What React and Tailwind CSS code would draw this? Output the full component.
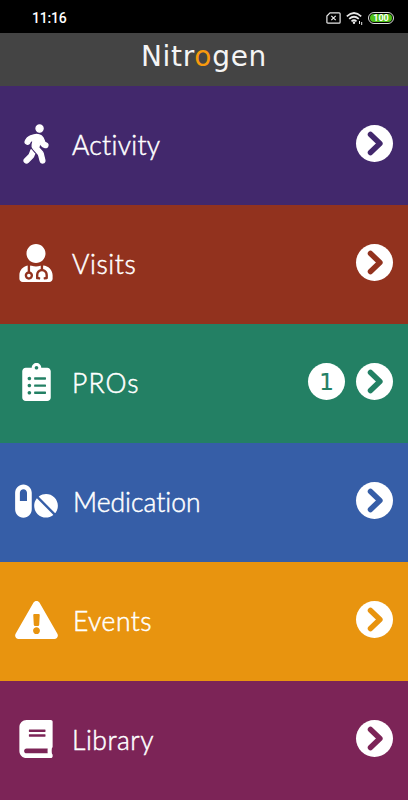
import React from "react";
import { FaWalking, FaUserMd, FaClipboardList, FaPills, FaExclamationTriangle, FaBook } from "react-icons/fa";

const rows = [
  { label: "Activity", Icon: FaWalking, icon: "w-[24px] mr-px overflow-visible [stroke-width:18] [stroke-linejoin:round]", row: "bg-[#42286c]", ink: "text-[#42286c]", text: "pl-[14px] tracking-[0.3px]" },
  { label: "Visits", Icon: FaUserMd, icon: "w-[34px] mr-[2px]", row: "bg-[#92321e]", ink: "text-[#92321e]", text: "pl-[14px] tracking-[0.6px]" },
  { label: "PROs", Icon: FaClipboardList, icon: "w-[29px] mr-px", row: "bg-[#238064]", ink: "text-[#238064]", text: "pl-[14px] tracking-[1.1px]", count: 1 },
  { label: "Medication", Icon: FaPills, icon: "w-[43px]", row: "bg-[#365ea7]", ink: "text-[#365ea7]", text: "pl-[15px] tracking-[0.02px] [font-variant-ligatures:none]" },
  { label: "Events", Icon: FaExclamationTriangle, icon: "w-[43px]", row: "bg-[#e8940f]", ink: "text-[#e8940f]", text: "pl-[15px] tracking-[0.5px]" },
  { label: "Library", Icon: FaBook, icon: "w-[34px] mr-[2px]", row: "bg-[#7c2457]", ink: "text-[#7c2457]", text: "pl-[14px] tracking-[0.5px]" },
];

function StatusBar() {
  return (
    <div className="flex h-[33px] items-center justify-between bg-black pt-[3px] pr-[14px] pl-[32px] text-white">
      <span className="font-['Roboto',sans-serif] text-[14px] leading-none font-medium tracking-[-0.2px]">11:16</span>
      <div className="flex items-center">
        <svg className="h-[12px] w-[15px]" viewBox="0 0 15 12" fill="none" stroke="#e8e8e8" strokeWidth="1.2">
          <path d="M4 .8h9.1q1 0 1 1v8.4q0 1-1 1H1.900q-1 0-1-1V4z" />
          <path d="M5.300 3.800l4.400 4.400M9.700 3.800L5.300 8.200" />
        </svg>
        <svg className="ml-[5px] h-[13px] w-[18px]" viewBox="0 0 18 13" fill="none" stroke="#e8e8e8" strokeWidth="1.7">
          <path d="M.8 4.300Q8 -2.300 15.200 4.300M3.200 6.900Q8 2.600 12.800 6.900M5.500 9.300Q8 7.200 10.500 9.300" />
          <circle cx="8" cy="10.800" r="1.200" fill="#e8e8e8" stroke="none" />
          <path d="M13.500 9v3M15.700 10v3" strokeWidth="1" />
        </svg>
        <div className="ml-[4px] flex h-[12px] w-[26px] items-center justify-center rounded-full border border-[#ddd] p-[1px]">
          <div className="flex h-full w-full items-center justify-center rounded-full bg-[#4fc118] font-['Roboto',sans-serif] text-[9px] leading-none font-bold">
            100
          </div>
        </div>
      </div>
    </div>
  );
}

export default function App() {
  return (
    <div className="h-[800px] w-[408px] overflow-hidden bg-[#7c2457]">
      <StatusBar />
      <header className="flex h-[53px] justify-center bg-[#444444] pt-[7px] font-['DejaVu_Sans',sans-serif] text-[28px] leading-[33px] tracking-[0.7px] text-[#f4f4f4]">
        <h1>
          Nitr<span className="text-[#f89a0c]">o</span>gen
        </h1>
      </header>
      <main>
        {rows.map(({ label, Icon, icon, row, ink, text, count }) => (
          <div key={label} className={`flex h-[119px] items-center pr-[15px] pb-[5px] pl-[15px] text-white ${row}`}>
            <div className="flex w-[43px] shrink-0 justify-center pt-px">
              <Icon className={`h-[38px] ${icon}`} />
            </div>
            <span className={`flex-1 pt-[3px] font-['Lato',sans-serif] text-[26.500px] leading-[36px] font-light [-webkit-text-stroke:0.5px_white] ${text}`}>{label}</span>
            {count && (
              <span className={`mr-[11px] flex size-[37px] items-center justify-center rounded-full bg-white pt-[2px] font-['DejaVu_Sans',sans-serif] text-[23px] ${ink} [-webkit-text-stroke:0.2px_currentColor]`}>
                {count}
              </span>
            )}
            <span className={`flex size-[37px] items-center justify-center rounded-full bg-white ${ink}`}>
              <svg className="size-[37px]" viewBox="0 0 37 37" fill="none" stroke="currentColor" strokeWidth="5.500" strokeLinecap="round" strokeLinejoin="round">
                <path d="M14.500 9.500L23.900 18.500L14.500 27.500" />
              </svg>
            </span>
          </div>
        ))}
      </main>
    </div>
  );
}
